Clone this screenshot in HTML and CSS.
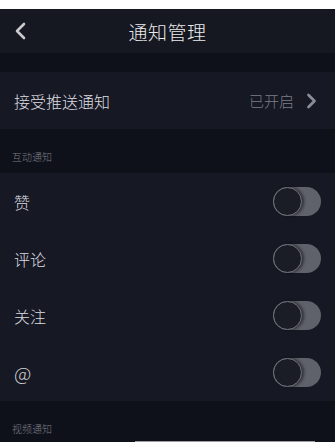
FILE: index.html
```html
<!DOCTYPE html>
<html lang="zh-CN">
<head>
  <meta charset="UTF-8">
  <meta name="viewport" content="width=device-width, initial-scale=1.0">
  <title>通知管理</title>
  <link rel="stylesheet" href="styles.css">
</head>
<body>
  <div class="status-strip"></div>

  <div class="nav-bar">
    <svg class="back-icon" width="12" height="18" viewBox="0 0 12 18">
      <path d="M10 2 L3 9 L10 16" fill="none" stroke="#c9cace" stroke-width="2.6" stroke-linecap="round" stroke-linejoin="round"/>
    </svg>
    <h1>通知管理</h1>
  </div>

  <div class="gap"></div>

  <div class="row">
    <span>接受推送通知</span>
    <div class="row-right">
      <span class="state">已开启</span>
      <svg width="11" height="16" viewBox="0 0 11 16">
        <path d="M2.5 2 L8.5 8 L2.5 14" fill="none" stroke="#8a8c94" stroke-width="2.8" stroke-linecap="round" stroke-linejoin="round"/>
      </svg>
    </div>
  </div>

  <div class="section-title">互动通知</div>

  <div class="row">
    <span>赞</span>
    <div class="switch"><div class="knob"></div></div>
  </div>
  <div class="row">
    <span>评论</span>
    <div class="switch"><div class="knob"></div></div>
  </div>
  <div class="row">
    <span>关注</span>
    <div class="switch"><div class="knob"></div></div>
  </div>
  <div class="row">
    <span class="at">@</span>
    <div class="switch"><div class="knob"></div></div>
  </div>

  <div class="section-title">视频通知</div>

  <div class="toast-edge"></div>
</body>
</html>
```

FILE: styles.css
```css
body {
  margin: 0;
  background-color: #0f111a;
  font-family: "Noto Sans CJK SC", "Noto Sans", sans-serif;
  color: #dcdde0;
  overflow: hidden;
  height: 442px;
  position: relative;
}

.status-strip {
  height: 9px;
  background-color: #ffffff;
}

.nav-bar {
  height: 44px;
  background-color: #161821;
  display: flex;
  align-items: center;
  justify-content: center;
  position: relative;
}

.nav-bar h1 {
  margin: 0;
  font-size: 19px;
  font-weight: 300;
  color: #ececee;
  letter-spacing: 0.5px;
}

.back-icon {
  position: absolute;
  left: 14px;
  top: 13px;
}

.gap {
  height: 19px;
}

.row {
  height: 57px;
  background-color: #161823;
  display: flex;
  align-items: center;
  justify-content: space-between;
  padding: 0 14px;
  font-size: 16px;
  font-weight: 300;
}

.row .at {
  font-size: 19px;
  color: #d0d1d4;
}

.row-right {
  display: flex;
  align-items: center;
  gap: 12px;
  margin-right: 4px;
}

.state {
  color: #7c7f88;
  font-size: 15px;
}

.section-title {
  height: 44px;
  box-sizing: border-box;
  padding: 20px 0 0 12px;
  font-size: 10px;
  font-weight: 300;
  color: #7a7d86;
}

.switch {
  width: 48px;
  height: 29px;
  border-radius: 15px;
  background-color: #5f616b;
  position: relative;
}

.knob {
  position: absolute;
  left: 0;
  top: 0;
  width: 27px;
  height: 27px;
  border-radius: 50%;
  background-color: #1a1c26;
  border: 1px solid #74767f;
  box-shadow: 2px 0 3px rgba(0, 0, 0, 0.5);
}

.toast-edge {
  position: absolute;
  left: 135px;
  top: 441px;
  width: 180px;
  height: 1px;
  background-color: #9c9ca2;
}
```
